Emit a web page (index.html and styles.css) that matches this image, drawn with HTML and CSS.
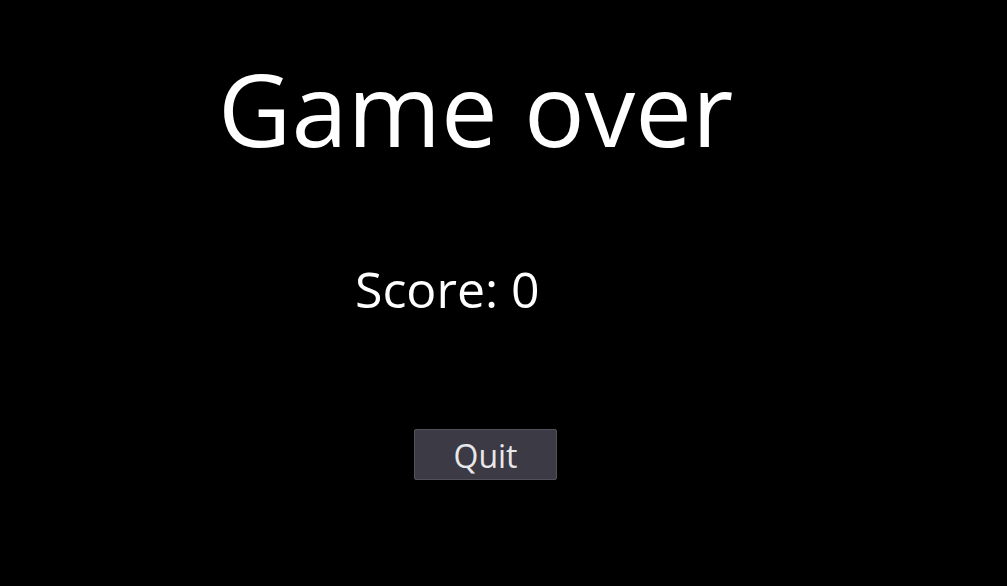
FILE: index.html
```html
<!DOCTYPE html>
<html>
<head>
<meta charset="utf-8">
<link rel="stylesheet" href="styles.css">
</head>
<body>
<main class="screen">
  <h1 class="title">Game over</h1>
  <p class="score">Score: 0</p>
  <button class="quit">Quit</button>
</main>
</body>
</html>
```
FILE: styles.css
```css
html, body {
  margin: 0;
  padding: 0;
  background: #000;
}
.screen {
  width: 1007px;
  height: 586px;
  display: flex;
  flex-direction: column;
  align-items: flex-start;
  font-family: "Open Sans", "Noto Sans", sans-serif;
  color: #fff;
}
.title {
  margin: 48px 0 0 218px;
  font-size: 101px;
  font-weight: 400;
  line-height: 120px;
}
.score {
  margin: 91px 0 0 355px;
  font-size: 50px;
  line-height: 60px;
}
.quit {
  margin: 110px 0 0 414px;
  width: 143px;
  height: 51px;
  background: #3b3a45;
  border: 1px solid #53525c;
  border-radius: 2px;
  color: #e8e8ea;
  font-family: "Open Sans", "Noto Sans", sans-serif;
  font-size: 32px;
  line-height: 1;
  padding: 2px 0 0;
}
```
